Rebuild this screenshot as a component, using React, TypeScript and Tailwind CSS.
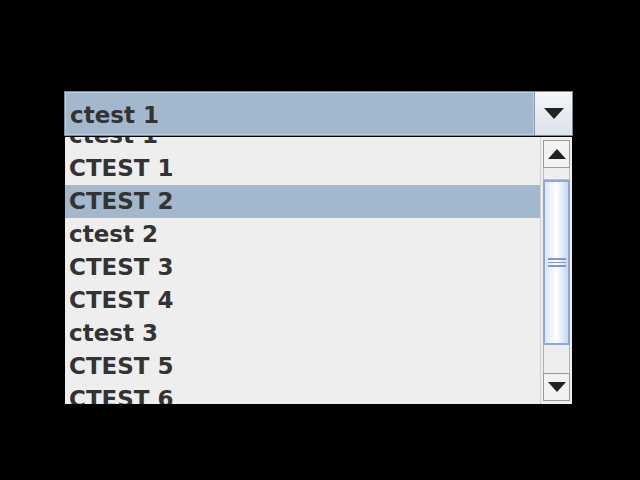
import React from "react";

const items = ["ctest 1", "CTEST 1", "CTEST 2", "ctest 2", "CTEST 3", "CTEST 4", "ctest 3", "CTEST 5", "CTEST 6"];

export default function App() {
  const font = { fontFamily: '"DejaVu Sans", sans-serif' };
  return (
    <div className="w-[640px] h-[480px] bg-black pt-[91px] pl-[64px]" style={font}>
      <div className="w-[509px] h-[45px] border border-[#7a8a99] bg-[#a3b8cc] flex">
        <div className="flex-1 h-full border border-[#b8cfe5] flex items-center pl-[4px] pt-[3px] text-[23px] font-bold text-[#333333]">
          ctest 1
        </div>
        <div className="w-[38px] h-full border-l border-[#8a9aaa] bg-gradient-to-b from-[#f4f6f9] to-[#dde3ea] flex items-center justify-center">
          <svg width="22" height="12" viewBox="0 0 22 12"><polygon points="1,0 21,0 11,11" fill="#222" /></svg>
        </div>
      </div>
      <div className="w-[507px] h-[267px] ml-[1px] mt-[1px] bg-[#eeeeee] flex overflow-hidden">
        <div className="flex-1 overflow-hidden">
          <div className="mt-[-18px]">
            {items.map((t, i) => (
              <div
                key={i}
                className={`h-[33px] flex items-center pl-[4px] text-[23px] font-bold text-[#333333] ${i === 2 ? "bg-[#a3b8cc]" : ""}`}
              >
                {t}
              </div>
            ))}
          </div>
        </div>
        <div className="w-[32px] h-full flex flex-col bg-[#eeeeee] border-l border-[#d0d0d0] pl-[2px] pr-[2px] pt-[3px] pb-[3px]">
          <div className="h-[28px] border border-[#9a9a9a] bg-[#f2f2f2] flex items-center justify-center">
            <svg width="18" height="10" viewBox="0 0 18 10"><polygon points="0,10 18,10 9,0" fill="#222" /></svg>
          </div>
          <div className="h-[12px] border-x border-[#b0b0b0] border-b border-[#c0c0c0]"></div>
          <div className="h-[165px] border-2 border-[#8fa6d6] bg-gradient-to-r from-[#dbe6f3] via-[#ffffff] to-[#c5d8ec] flex items-center justify-center">
            <div className="flex flex-col gap-[2px]">
              <div className="w-[18px] h-[1.5px] bg-[#7f97c9]"></div>
              <div className="w-[18px] h-[1.5px] bg-[#7f97c9]"></div>
              <div className="w-[18px] h-[1.5px] bg-[#7f97c9]"></div>
            </div>
          </div>
          <div className="flex-1 border-x border-[#b0b0b0]"></div>
          <div className="h-[28px] border border-[#9a9a9a] bg-[#f2f2f2] flex items-center justify-center">
            <svg width="18" height="10" viewBox="0 0 18 10"><polygon points="0,0 18,0 9,10" fill="#222" /></svg>
          </div>
        </div>
      </div>
    </div>
  );
}
